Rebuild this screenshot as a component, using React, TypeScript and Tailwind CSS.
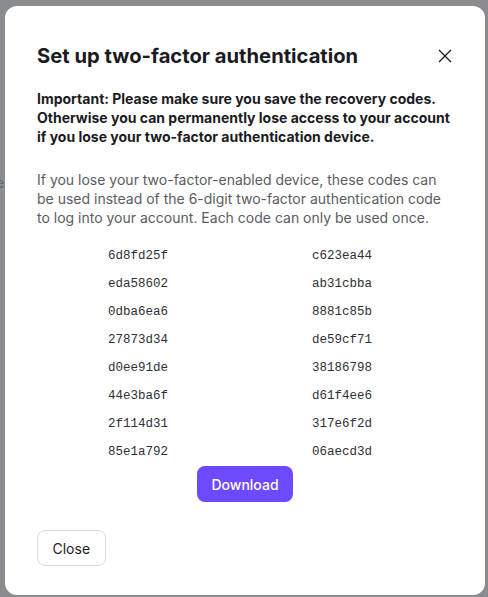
const codes = [
  ["6d8fd25f", "c623ea44"],
  ["eda58602", "ab31cbba"],
  ["0dba6ea6", "8881c85b"],
  ["27873d34", "de59cf71"],
  ["d0ee91de", "38186798"],
  ["44e3ba6f", "d61f4ee6"],
  ["2f114d31", "317e6f2d"],
  ["85e1a792", "06aecd3d"],
];

export default function App() {
  return (
    <div className="relative w-[488px] h-[597px] overflow-hidden bg-[#8b8c90] font-['Inter',sans-serif]">
      <span className="absolute left-[-4px] top-[172px] text-[14px] text-[#4f6e78]">e</span>
      <div className="relative ml-[5px] mt-[6px] w-[480px] h-[589px] rounded-[12px] bg-white px-[32px] pt-[36px]">
        <div className="flex items-start justify-between">
          <h2 className="text-[20.2px] leading-[28px] font-bold text-[#1b1b1f]">
            Set up two-factor authentication
          </h2>
          <button className="mt-[7px] mr-[1px] text-[#1b1b1f]">
            <svg width="14" height="14" viewBox="0 0 14 14" fill="none" stroke="currentColor" strokeWidth="1.3">
              <path d="M1 1L13 13M13 1L1 13" />
            </svg>
          </button>
        </div>

        <p className="mt-[19px] text-[14px] leading-[19px] font-bold text-[#1b1b1f]">
          Important: Please make sure you save the recovery codes. Otherwise you can permanently lose access to your
          account if you lose your two-factor authentication device.
        </p>

        <p className="mt-[24px] text-[14px] leading-[19px] text-[#5b5b63]">
          If you lose your two-factor-enabled device, these codes can be used instead of the 6-digit two-factor
          authentication code to log into your account. Each code can only be used once.
        </p>

        <div className="mt-[15px] ml-[71px] grid grid-cols-[204px_204px] font-['Liberation_Mono',monospace] text-[12.5px] leading-[28px] text-[#2f2f35]">
          {codes.map(([a, b]) => (
            <div key={a} className="contents">
              <span>{a}</span>
              <span>{b}</span>
            </div>
          ))}
        </div>

        <div className="flex justify-center">
          <button className="h-[36px] rounded-[8px] bg-[#6d4aff] px-[14.5px] text-[14px] font-medium text-white">
            Download
          </button>
        </div>

        <button className="mt-[28px] h-[36px] rounded-[8px] border border-[#dedbd9] px-[14.5px] text-[14px] text-[#1b1b1f]">
          Close
        </button>
      </div>
    </div>
  );
}
